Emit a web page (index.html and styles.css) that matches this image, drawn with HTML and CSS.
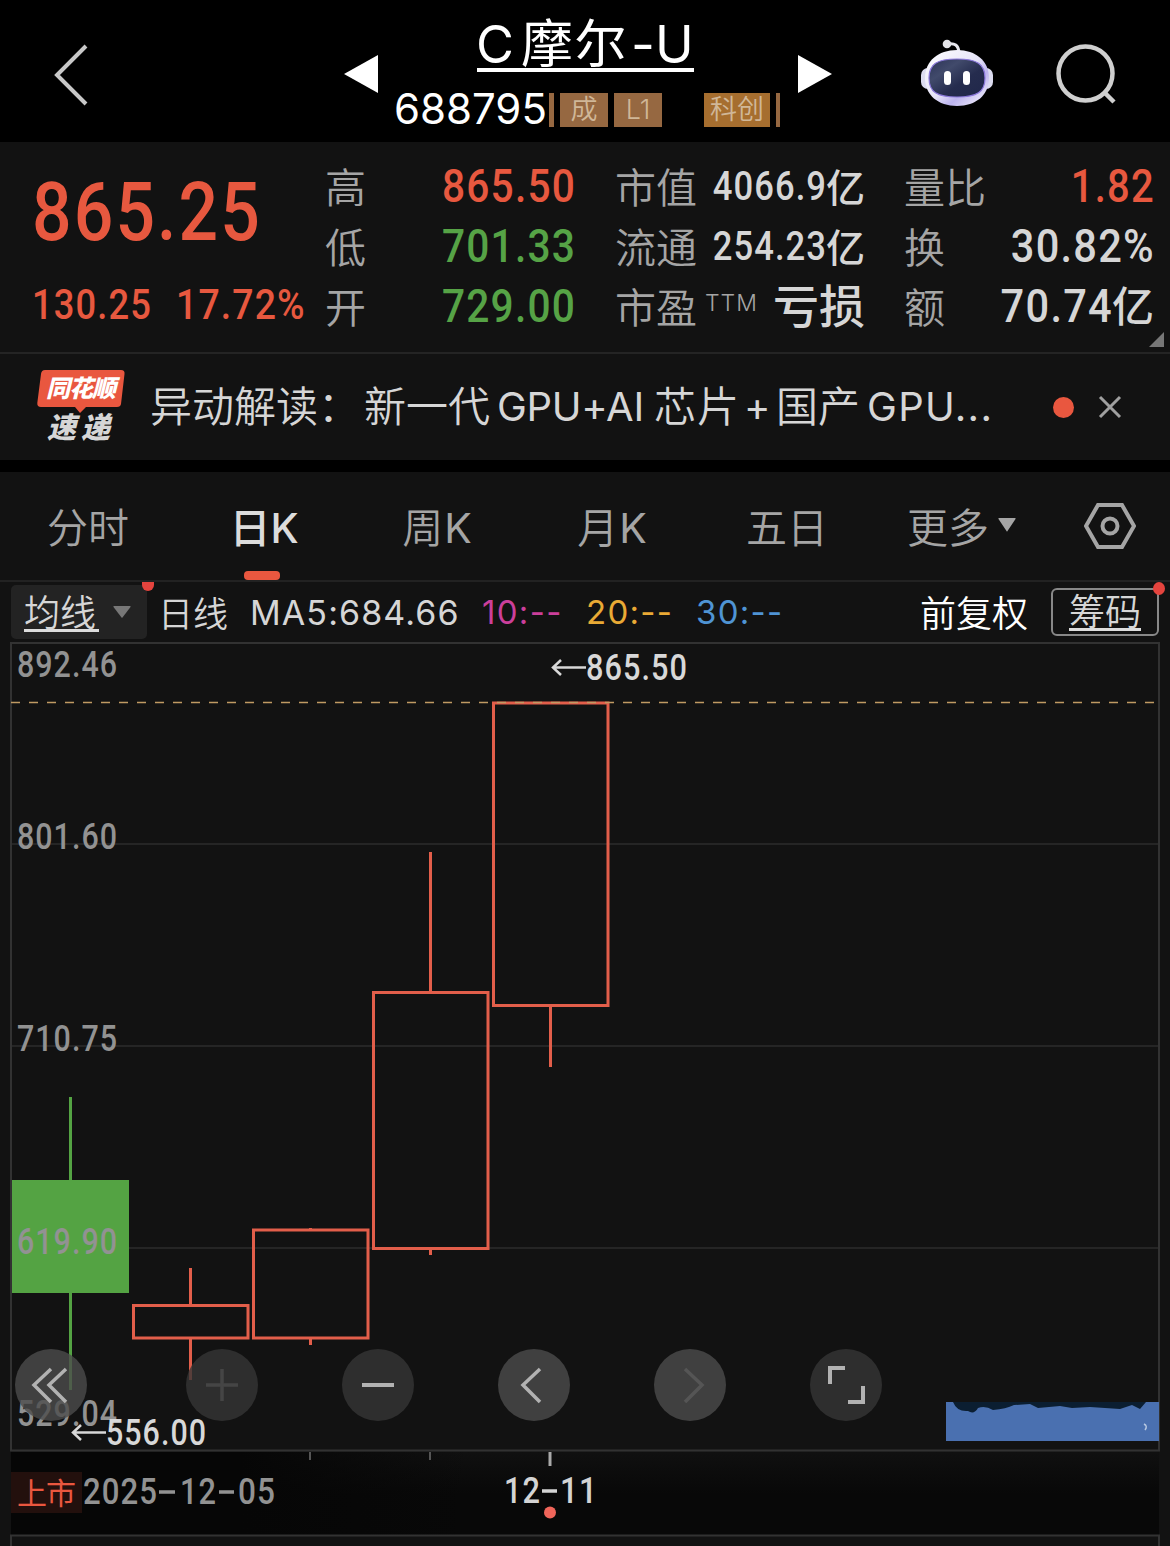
FILE: index.html
```html
<!DOCTYPE html>
<html lang="zh-CN">
<head>
<meta charset="utf-8">
<title>C摩尔-U 688795</title>
<link rel="stylesheet" href="styles.css">
</head>
<body>
<header class="top">
  <svg class="back" width="40" height="64" viewBox="0 0 40 64"><path d="M33 4 4 33 33 62" transform="translate(0 -1)"/></svg>
  <svg class="tri prev" width="34" height="38" viewBox="0 0 34 38"><path d="M0 19 34 0V38z"/></svg>
  <div class="title">
    <h1><span>C</span>摩尔<span class="dash">-</span>U</h1>
    <div class="code"><span class="num">688795</span><i class="bar"></i><span class="tag">成</span><span class="tag">L1</span><span class="tag gold">科创</span><i class="bar end"></i></div>
  </div>
  <svg class="tri next" width="34" height="38" viewBox="0 0 34 38"><path d="M34 19 0 0V38z"/></svg>
  <svg class="robot" width="74" height="70" viewBox="0 0 74 70">
    <defs>
      <linearGradient id="shell" x1="0" y1="0" x2="1" y2="1"><stop offset="0" stop-color="#fff"/><stop offset=".5" stop-color="#e6e4f8"/><stop offset=".68" stop-color="#bcb3ee"/><stop offset="1" stop-color="#fff"/></linearGradient>
      <linearGradient id="face" x1="0" y1="0" x2="1" y2="1"><stop offset="0" stop-color="#2b3357"/><stop offset=".3" stop-color="#414a6b"/><stop offset=".6" stop-color="#252c4e"/><stop offset="1" stop-color="#20274a"/></linearGradient>
    </defs>
    <path d="M28 5c7-1 10 1 11 8" fill="none" stroke="#e9e9ef" stroke-width="3"/>
    <circle cx="27" cy="5" r="4.300" fill="#e4e4e8"/>
    <rect x="1" y="29" width="14" height="21" rx="7" fill="#dcdcf0"/>
    <rect x="59" y="29" width="14" height="21" rx="7" fill="#dcdcf0"/>
    <path d="M37 11C56 11 69 22 69 39S56 67 37 67 5 56 5 39 18 11 37 11z" fill="url(#shell)"/>
    <path d="M37 20c20 0 28 5 28 19s-8 19-28 19S9 53 9 39s8-19 28-19z" fill="url(#face)" stroke="#8c79dc" stroke-width="1.200"/>
    <rect x="24" y="32" width="7" height="14" rx="3.500" fill="#fff"/>
    <rect x="43" y="32" width="7" height="14" rx="3.500" fill="#fff"/>
  </svg>
  <svg class="search" width="62" height="62" viewBox="0 0 62 62"><circle cx="30.500" cy="30.500" r="27"/><path d="m49 49 10 10"/></svg>
</header>

<section class="quote">
  <div class="price">
    <div class="last"><span class="din">865.25</span></div>
    <div class="chg"><span class="din">130.25</span><span class="din pct">17.72%</span></div>
  </div>
  <dl class="col">
    <dt>高</dt><dd class="up"><span class="din">865.50</span></dd>
    <dt>低</dt><dd class="down"><span class="din">701.33</span></dd>
    <dt>开</dt><dd class="down"><span class="din">729.00</span></dd>
  </dl>
  <dl class="col mid">
    <dt>市值</dt><dd><span class="din">4066.9</span><b>亿</b></dd>
    <dt>流通</dt><dd><span class="din">254.23</span><b>亿</b></dd>
    <dt>市盈<sup>TTM</sup></dt><dd class="loss">亏损</dd>
  </dl>
  <dl class="col right">
    <dt>量比</dt><dd class="up"><span class="din slim">1.82</span></dd>
    <dt>换</dt><dd><span class="din">30.82%</span></dd>
    <dt>额</dt><dd><span class="din">70.74</span><b>亿</b></dd>
  </dl>
  <svg class="corner" width="15" height="15" viewBox="0 0 14 14"><path d="M14 0V14H0z"/></svg>
</section>

<section class="news">
  <div class="logo">
    <svg class="bubble" width="88" height="44" viewBox="0 0 88 44"><path d="M8 0H84Q88 0 87.500 4L84 34Q83.500 37 80 37H49L43 43 38 37H4Q0 37 .300 33L4 4Q4.500 0 8 0z"/></svg>
    <span class="l1">同花顺</span><span class="l2">速递</span>
  </div>
  <p class="headline"><span class="lead">异动解读：</span><span>新一代</span><span class="lat g1">GPU+AI</span><span class="chips">芯片</span><span class="lat plus">+</span><span>国产</span><span class="lat g2">GPU...</span></p>
  <i class="dot"></i>
  <svg class="close" width="24" height="24" viewBox="0 0 24 24"><path d="M2 2 22 22M22 2 2 22"/></svg>
</section>

<nav class="tabs">
  <span class="t1">分时</span><span class="on">日K</span><span class="t3">周<em>K</em></span><span class="t4">月<em>K</em></span><span class="t5">五日</span>
  <span class="more">更多<svg width="18" height="14" viewBox="0 0 18 14"><path d="M1 0H17Q18 0 17.500 1L9.500 13Q9 14 8.500 13L.500 1Q0 0 1 0z"/></svg></span>
  <svg class="gear" width="52" height="46" viewBox="0 0 52 46"><path d="M14 2H38L50 23 38 44H14L2 23z"/><circle cx="26" cy="23" r="7.500"/></svg>
</nav>

<section class="ma">
  <div class="pick"><span class="ul">均线</span><svg width="18" height="12" viewBox="0 0 18 12"><path d="M1 0H17Q18 0 17.500 1L9.500 11.500Q9 12 8.500 11.500L.500 1Q0 0 1 0z"/></svg><i class="badge"></i></div>
  <span class="day">日线</span><span class="m5">MA5:684.66</span><span class="m10">10:--</span><span class="m20">20:--</span><span class="m30">30:--</span>
  <span class="adj">前复权</span>
  <div class="chip"><span class="ul">筹码</span><i class="badge"></i></div>
</section>

<section class="chart">
  <svg class="plot" width="1170" height="904" viewBox="0 642 1170 904">
    <defs>
      <linearGradient id="axis" x1="0" y1="0" x2="0" y2="1"><stop offset="0" stop-color="#101010"/><stop offset=".5" stop-color="#080808"/><stop offset="1" stop-color="#080808"/></linearGradient>
      <linearGradient id="fade" x1="0" y1="0" x2="1" y2="0"><stop offset="0" stop-color="#060606"/><stop offset=".2" stop-color="#060606"/><stop offset=".4" stop-color="#060606" stop-opacity="0"/></linearGradient>
    </defs>
    <rect x="11" y="1452" width="1148" height="83" fill="url(#axis)"/>
    <rect x="11" y="1452" width="1148" height="83" fill="url(#fade)"/>
    <g class="grid">
      <path d="M11 844H1159M11 1046H1159M11 1248H1159"/>
      <path class="frame" d="M11 1450.500V643H1159V1450.500ZM11 1546V1535.500H1159V1546"/>
    </g>
    <path class="wick" d="M70.500 1097V1390"/>
    <rect x="12" y="1180" width="117" height="113" fill="#54a343"/>
    <g class="red">
      <path d="M190.500 1268V1305M190.500 1338V1380M310.500 1228V1230M310.500 1338V1345M430.500 852V992M430.500 1248V1255M550.500 1006V1067"/>
      <rect x="133.500" y="1305.500" width="114.500" height="32.500"/>
      <rect x="253.500" y="1230" width="114.500" height="108"/>
      <rect x="373.500" y="992.500" width="114.500" height="256"/>
      <rect x="493.500" y="703" width="114.500" height="302.500"/>
    </g>
    <path d="M11 702.500H1158" stroke="#c09a63" stroke-width="1.600" stroke-dasharray="9 9"/>
    <g class="lbl">
      <text x="17" y="677" textLength="101" lengthAdjust="spacingAndGlyphs">892.46</text>
      <text x="17" y="849" textLength="101" lengthAdjust="spacingAndGlyphs">801.60</text>
      <text x="17" y="1051" textLength="101" lengthAdjust="spacingAndGlyphs">710.75</text>
      <text x="17" y="1253.500" textLength="101" lengthAdjust="spacingAndGlyphs">619.90</text>
      <text x="17" y="1426" textLength="101" lengthAdjust="spacingAndGlyphs">529.04</text>
    </g>
    <g class="mark">
      <text x="586" y="680" textLength="102" lengthAdjust="spacingAndGlyphs">865.50</text>
      <text x="106" y="1445" textLength="101" lengthAdjust="spacingAndGlyphs">556.00</text>
      <path d="M586 667.500H553M561 660 553 667.500 561 675M106 1432.500H73M81 1425 73 1432.500 81 1440"/>
    </g>
    <path d="M946 1402H1159V1441H946z" fill="#4a70b0"/>
    <path d="M953 1402Q957 1412 968 1411 974 1415 978 1408 985 1405 993 1410 1006 1409 1014 1405L1030 1404 1038 1408 1060 1406 1072 1408 1090 1407 1120 1409 1132 1405 1140 1409 1146 1402z" fill="#0b1e31"/>
    <path d="M1144 1424q4 2 1 6" fill="none" stroke="#b5c6e0" stroke-width="1.500"/>
    <path d="M310 1452V1460M430 1452V1460" stroke="#555" stroke-width="2"/>
    <path d="M550 1452V1466" stroke="#aaa" stroke-width="3"/>
    <rect x="11" y="1472" width="71" height="41" fill="#23100d"/>
    <text class="ipo" x="17" y="1504" textLength="59">上市</text>
    <g class="date">
      <text x="83" y="1504" textLength="75" lengthAdjust="spacingAndGlyphs">2025</text>
      <text x="180" y="1504" textLength="37" lengthAdjust="spacingAndGlyphs">12</text>
      <text x="238" y="1504" textLength="38" lengthAdjust="spacingAndGlyphs">05</text>
      <path d="M159 1492H175M219 1492H234"/>
    </g>
    <g class="date now">
      <text x="504" y="1503" textLength="37" lengthAdjust="spacingAndGlyphs">12</text>
      <text x="560" y="1503" textLength="38" lengthAdjust="spacingAndGlyphs">11</text>
      <path d="M542 1491H557"/>
    </g>
    <circle cx="550" cy="1512.500" r="6" fill="#f0655a"/>
  </svg>
  <div class="tools">
    <button class="lit first"><svg viewBox="0 0 72 72"><path d="M51 20 34 36 51 53M36 20 19 36 36 53"/></svg></button>
    <button class="off"><svg viewBox="0 0 72 72"><path d="M36 20V52M20 36H52"/></svg></button>
    <button><svg viewBox="0 0 72 72"><path d="M20 36H52" stroke-width="4"/></svg></button>
    <button class="lit"><svg viewBox="0 0 72 72"><path d="M42 20 25 36 42 53"/></svg></button>
    <button class="lit off"><svg viewBox="0 0 72 72"><path d="M31 20 48 36 31 53"/></svg></button>
    <button><svg viewBox="0 0 72 72"><path d="M20 35V19H35M38 53H53V37" stroke-width="4"/></svg></button>
  </div>
</section>
</body>
</html>
```
FILE: styles.css
```css
* { box-sizing: border-box; }
body { margin: 0; width: 1170px; height: 1546px; overflow: hidden; background: #121212; color: #d6d6d6; font-family: Inter, "Noto Sans CJK SC", sans-serif; font-weight: 350; }
svg { display: block; flex: none; }
h1, p, dl, dd { margin: 0; }
i, em { font-style: normal; }
.din { display: inline-block; font-family: Roboto, sans-serif; font-weight: 500; letter-spacing: .03em; white-space: pre; }

.top { display: flex; height: 142px; background: #000; }
.back { margin: 43px 0 0 53px; fill: none; stroke: #c8c8c8; stroke-width: 4; }
.tri { fill: #fff; margin-top: 55px; }
.prev { margin-left: 251px; }
.title { width: 420px; padding-left: 16px; color: #fff; }
.title h1 { width: 217px; height: 72px; margin-left: 83px; padding-top: 8px; border-bottom: 4px solid #fff; font-size: 52px; line-height: 74px; font-weight: 400; font-weight: 370; letter-spacing: 1.500px; white-space: nowrap; }
.title h1 span { letter-spacing: 7px; margin-left: -1px; }
.title h1 .dash { margin-left: 3px; letter-spacing: 0; }
.code { display: flex; height: 34px; margin-top: 21px; align-items: center; }
.num { width: 155px; font-size: 42px; line-height: 34px; font-weight: 400; margin-top: -2px; }
.bar { width: 5px; height: 34px; background: #966841; }
.tag { width: 48px; height: 34px; margin-left: 6px; background: #966841; color: #d0b798; font-size: 27px; line-height: 33px; text-align: center; }
.gold { width: 66px; margin-left: 42px; background: #a66e2f; }
.end { width: 4px; margin-left: 6px; }
.robot { margin: 39px 0 0 88px; }
.search { margin: 43px 0 0 61px; fill: none; stroke: #cfcfcf; stroke-width: 4.500; }

.quote { position: relative; display: flex; height: 212px; border-bottom: 2px solid #242424; }
.price { width: 325px; padding-left: 32px; color: #e7583f; }
.last { height: 133px; font-size: 82px; line-height: 138px; }
.last .din { transform: scaleX(.85); transform-origin: left; }
.chg { display: flex; gap: 24px; font-size: 43px; line-height: 59px; }
.chg .din { width: 120px; transform: scaleX(.845); transform-origin: left; }
.chg .pct { transform: scaleX(.87); }
.col { display: grid; grid-template-columns: auto minmax(0, 1fr); grid-auto-rows: 60px; width: 250px; padding-top: 15px; line-height: 60px; }
.col dt { padding-top: 1px; height: 60px; color: #a5a5a5; font-size: 41px; white-space: nowrap; }
.col dd { display: flex; justify-content: flex-end; align-items: center; height: 58px; font-size: 47px; white-space: nowrap; }
.col dd .din { transform: scaleX(.865); transform-origin: right; margin-right: -1px; }
.col b { margin-top: 2px; font-size: 42px; font-weight: 500; }
.mid { margin-left: 40px; }
.mid dd { height: 60px; }
.mid dd .din { font-size: 40px; }
.mid dd b { font-size: 39px; }
.mid sup { display: inline-block; margin-left: 8px; font-size: 23px; line-height: 20px; letter-spacing: 1px; vertical-align: 12px; }
.mid .loss { height: 58px; font-size: 46px; font-weight: 500; }
.right { margin-left: 39px; }
.right dd .din { transform: scaleX(.885); }
.right dd .slim { transform: scaleX(.85); }
.up { color: #e7583f; }
.down { color: #56a346; }
.corner { position: absolute; left: 1149px; top: 190px; fill: #777; }

.news { display: flex; align-items: center; height: 118px; border-bottom: 12px solid #000; }
.logo { position: relative; display: flex; flex-direction: column; width: 88px; height: 74px; margin-left: 37px; font-style: italic; font-weight: 900; }
.bubble { position: absolute; left: 0; top: 0; fill: #e9573f; }
.l1 { position: relative; padding-left: 9px; font-size: 24px; line-height: 38px; letter-spacing: -1px; color: #fff; white-space: nowrap; }
.l2 { padding-left: 10px; font-size: 29px; line-height: 40px; letter-spacing: 5px; white-space: nowrap; }
.headline { display: flex; width: 850px; margin-left: 25px; font-size: 42px; line-height: 60px; white-space: nowrap; }
.lead { width: 214px; }
.lat { font-size: 40px; font-weight: 400; }
.g1 { margin-left: 7px; width: 157px; letter-spacing: -.3px; }
.plus { width: 32px; }
.chips { width: 90px; letter-spacing: 1px; }
.g2 { margin-left: 7px; letter-spacing: 1.300px; }
.dot { width: 21px; height: 21px; margin-left: 53px; border-radius: 50%; background: #e9573f; }
.close { margin-left: 24px; fill: none; stroke: #a0a0a0; stroke-width: 3; }

.tabs { display: flex; align-items: center; height: 110px; padding-bottom: 3px; border-bottom: 2px solid #222; font-size: 41px; color: #a5a5a5; white-space: nowrap; }
.tabs > span { position: relative; width: 176px; text-align: center; }
.tabs em { font-weight: 400; margin-left: 1px; }
.tabs .on { color: #dcdcdc; font-weight: 500; }
.tabs .t3 { width: 170px; }
.tabs .t4 { width: 180px; }
.tabs .t5 { width: 170px; }
.on::after { content: ""; position: absolute; left: 68px; top: 76px; width: 36px; height: 9px; border-radius: 4px; background: #e9573f; }
.tabs .more { display: flex; align-items: center; gap: 9px; width: 177px; padding-left: 35px; }
.more svg { fill: #a5a5a5; }
.gear { margin: 3px 0 0 35px; fill: none; stroke: #a5a5a5; stroke-width: 4; }

.ma { display: flex; align-items: center; height: 60px; font-size: 35px; white-space: nowrap; }
.pick { position: relative; display: flex; align-items: center; gap: 14px; width: 136px; height: 54px; margin-left: 11px; padding-left: 13px; border-radius: 5px; background: #232323; }
.pick svg { fill: #777; }
.ul { height: 40px; border-bottom: 3px solid #ddd; line-height: 42px; }
.pick .ul { width: 75px; font-size: 36px; }
.badge { position: absolute; left: 131px; top: -3px; width: 12px; height: 9px; border-radius: 0 0 6px 6px; background: #e5443e; }
.day { width: 92px; margin: -2px 0 0 11px; }
.m5 { width: 232px; font-size: 34px; font-weight: 400; letter-spacing: 1.100px; }
.m10, .m20, .m30 { font-size: 33px; font-weight: 400; letter-spacing: 1.300px; }
.m10 { width: 104px; color: #cb3f9b; }
.m20 { width: 110px; color: #e9aa35; }
.m30 { width: 110px; color: #4f94d4; }
.adj { width: 117px; margin: -2px 0 0 114px; font-size: 36px; color: #fff; }
.chip { position: relative; width: 108px; height: 48px; margin-left: 14px; border: 2px solid #888; border-radius: 6px; padding: 1px 0 0 16px; }
.chip .ul { display: block; width: 72px; font-size: 36px; line-height: 43px; }
.chip .badge { left: 100px; top: -8px; height: 13px; border-radius: 50%; }

.chart { position: relative; }
.grid { fill: none; stroke: #252525; stroke-width: 2; }
.frame { stroke: #323232; }
.wick { stroke: #54a343; stroke-width: 3; }
.red { fill: none; stroke: #e25e4a; stroke-width: 3; }
.lbl, .mark, .date { font-family: Roboto, sans-serif; font-weight: 500; font-size: 36px; letter-spacing: 1.200px; fill: #929292; }
.mark { fill: #d8d8d8; }
.mark path { fill: none; stroke: #d8d8d8; stroke-width: 2.500; }
.date path { stroke: #929292; stroke-width: 3.500; }
.date.now { fill: #d4d4d4; }
.date.now path { stroke: #d4d4d4; }
.ipo { font-family: "Noto Sans CJK SC", sans-serif; font-weight: 400; font-size: 30px; fill: #e9573f; }
.tools { position: absolute; left: 15px; top: 707px; display: flex; gap: 84px; }
.tools button { width: 72px; height: 72px; padding: 0; border: 0; border-radius: 50%; background: rgba(54, 54, 54, .8); }
.tools .lit { background: rgba(76, 76, 76, .8); }
.tools .first { margin-right: 15px; }
.tools svg { width: 72px; height: 72px; fill: none; stroke: #b2b2b2; stroke-width: 3.500; }
.tools .off svg { stroke: #454545; }
.tools .lit.off svg { stroke: #555; }
```
